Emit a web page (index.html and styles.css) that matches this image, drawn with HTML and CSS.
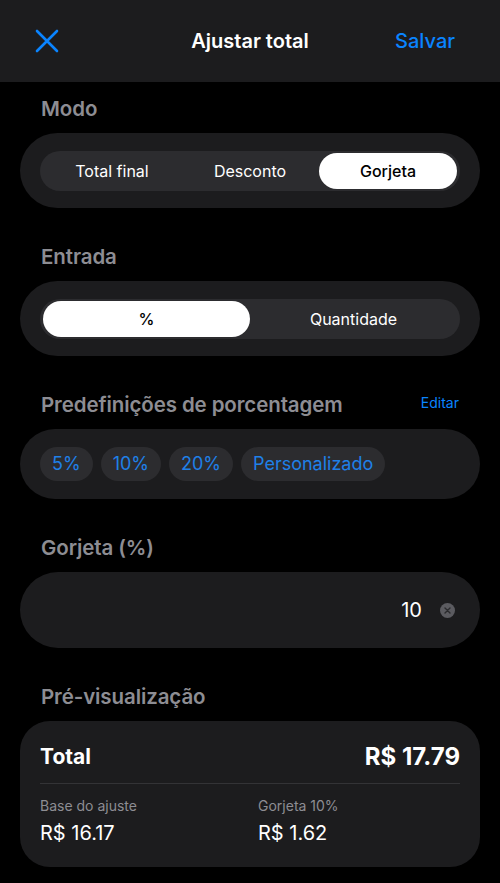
FILE: index.html
```html
<!DOCTYPE html>
<html lang="pt-BR">
<head>
    <meta charset="UTF-8">
    <meta name="viewport" content="width=device-width, initial-scale=1.0">
    <title>Ajustar total</title>
    <link rel="stylesheet" href="styles.css">
</head>
<body>
    <header class="topbar">
        <button class="close-btn" aria-label="Fechar">
            <svg width="24" height="24" viewBox="0 0 24 24">
                <path d="M2 2 L22 22 M22 2 L2 22" stroke="#0a84ff" stroke-width="2.6" stroke-linecap="round" fill="none"/>
            </svg>
        </button>
        <h1>Ajustar total</h1>
        <button class="save-btn">Salvar</button>
    </header>

    <main class="content">
        <section class="section">
            <div class="section-head"><h2>Modo</h2></div>
            <div class="card">
                <div class="segmented three">
                    <span class="seg">Total final</span>
                    <span class="seg">Desconto</span>
                    <span class="seg active">Gorjeta</span>
                </div>
            </div>
        </section>

        <section class="section">
            <div class="section-head"><h2>Entrada</h2></div>
            <div class="card">
                <div class="segmented two">
                    <span class="seg active">%</span>
                    <span class="seg">Quantidade</span>
                </div>
            </div>
        </section>

        <section class="section">
            <div class="section-head">
                <h2>Predefinições de porcentagem</h2>
                <a class="edit-link">Editar</a>
            </div>
            <div class="card chips-card">
                <span class="chip">5%</span>
                <span class="chip">10%</span>
                <span class="chip">20%</span>
                <span class="chip">Personalizado</span>
            </div>
        </section>

        <section class="section">
            <div class="section-head"><h2>Gorjeta (%)</h2></div>
            <div class="card input-card">
                <span class="input-value">10</span>
                <span class="clear-btn">
                    <svg width="15" height="15" viewBox="0 0 15 15">
                        <circle cx="7.5" cy="7.5" r="7.5" fill="#5b5b60"/>
                        <path d="M5 5 L10 10 M10 5 L5 10" stroke="#2a2a2d" stroke-width="1.4" stroke-linecap="round"/>
                    </svg>
                </span>
            </div>
        </section>

        <section class="section">
            <div class="section-head"><h2>Pré-visualização</h2></div>
            <div class="card preview-card">
                <div class="total-row">
                    <span class="total-label">Total</span>
                    <span class="total-value">R$ 17.79</span>
                </div>
                <div class="breakdown">
                    <div class="cell">
                        <span class="cell-label">Base do ajuste</span>
                        <span class="cell-value">R$ 16.17</span>
                    </div>
                    <div class="cell">
                        <span class="cell-label">Gorjeta 10%</span>
                        <span class="cell-value">R$ 1.62</span>
                    </div>
                </div>
            </div>
        </section>
    </main>
</body>
</html>
```

FILE: styles.css
```css
body {
    margin: 0;
    background: #000;
    color: #fff;
    font-family: 'Inter', 'Noto Sans', sans-serif;
    overflow: hidden;
}
.topbar {
    height: 82px;
    background: #1c1c1e;
    display: flex;
    align-items: center;
    justify-content: space-between;
    padding: 0 45px 0 35px;
    box-sizing: border-box;
    position: relative;
}
.topbar h1 {
    position: absolute;
    left: 0;
    right: 0;
    text-align: center;
    margin: 0;
    font-size: 20px;
    font-weight: 600;
    pointer-events: none;
}
.close-btn,
.save-btn {
    background: none;
    border: none;
    padding: 0;
    font-family: inherit;
    cursor: pointer;
}
.close-btn {
    display: flex;
    width: 24px;
    height: 24px;
}
.save-btn {
    color: #0a84ff;
    font-size: 20px;
    font-weight: 500;
}
.content {
    padding: 14px 20px 0;
}
.section {
    margin-bottom: 36px;
}
.section-head {
    display: flex;
    align-items: center;
    justify-content: space-between;
    padding: 0 21px;
    margin-bottom: 13px;
    height: 24px;
}
.section-head h2 {
    margin: 0;
    font-size: 20.5px;
    font-weight: 600;
    color: #8d8d93;
    letter-spacing: -0.1px;
}
.edit-link {
    color: #0a84ff;
    font-size: 14px;
    margin-top: -3px;
}
.card {
    background: #1c1c1e;
    border-radius: 38px;
    padding: 18px 20px 17px;
}
.segmented {
    display: grid;
    background: #2c2c2f;
    border-radius: 20px;
    padding: 2px 3px;
    height: 40px;
    box-sizing: border-box;
}
.segmented.three {
    grid-template-columns: 1fr 1fr 1fr;
}
.segmented.two {
    grid-template-columns: 1fr 1fr;
}
.seg {
    display: flex;
    align-items: center;
    justify-content: center;
    font-size: 16px;
    font-weight: 400;
    color: #fff;
    border-radius: 18px;
}
.seg.active {
    background: #fff;
    color: #000;
    font-weight: 500;
}
.chips-card {
    display: flex;
    gap: 8px;
    padding: 18px 20px 18px;
}
.chip {
    background: #2c2c2f;
    color: #1f80e8;
    font-size: 18px;
    height: 34px;
    line-height: 34px;
    padding: 0 12px;
    border-radius: 17px;
}
.input-card {
    display: flex;
    align-items: center;
    justify-content: flex-end;
    gap: 18px;
    height: 76px;
    box-sizing: border-box;
    padding: 0 25px;
}
.input-value {
    font-size: 20px;
}
.clear-btn {
    display: flex;
}
.preview-card {
    border-radius: 30px;
    padding: 21px 20px 22px;
}
.total-row {
    display: flex;
    justify-content: space-between;
    align-items: center;
    padding-bottom: 12px;
    border-bottom: 1px solid #333336;
}
.total-label {
    font-size: 21px;
    font-weight: 700;
}
.total-value {
    font-size: 24px;
    font-weight: 700;
}
.breakdown {
    display: grid;
    grid-template-columns: 218px 1fr;
    padding-top: 13px;
}
.cell {
    display: flex;
    flex-direction: column;
    gap: 7px;
}
.cell-label {
    font-size: 14px;
    color: #8d8d93;
}
.cell-value {
    font-size: 20px;
}
```
